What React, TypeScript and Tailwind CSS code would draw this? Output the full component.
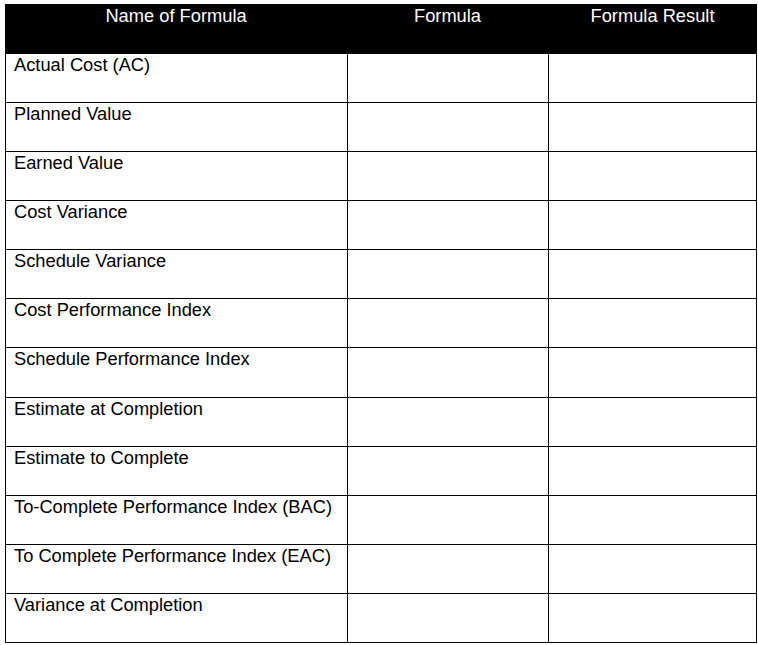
import React from "react";

const rows = [
  "Actual Cost (AC)",
  "Planned Value",
  "Earned Value",
  "Cost Variance",
  "Schedule Variance",
  "Cost Performance Index",
  "Schedule Performance Index",
  "Estimate at Completion",
  "Estimate to Complete",
  "To-Complete Performance Index (BAC)",
  "To Complete Performance Index (EAC)",
  "Variance at Completion",
];

export default function App() {
  return (
    <div className="bg-white w-[758px] h-[645px] pt-[4px] pl-[5px]" style={{ fontFamily: '"Liberation Sans", Arial, sans-serif' }}>
      <div className="w-[752px]">
        <div className="grid grid-cols-[342px_201px_209px] h-[50px] bg-black text-white text-[18.3px] leading-[21px]">
          <div className="text-center pt-[1px]">Name of Formula</div>
          <div className="text-center pt-[1px]">Formula</div>
          <div className="text-center pt-[1px]">Formula Result</div>
        </div>
        {rows.map((r, i) => (
          <div
            key={r}
            className={`grid grid-cols-[342px_201px_209px] border-b border-black text-black text-[18.3px] leading-[21px] ${i === 6 ? "h-[50px]" : "h-[49px]"}`}
          >
            <div className="border-l border-black pl-[8px] pt-0 whitespace-nowrap">{r}</div>
            <div className="border-l border-black"></div>
            <div className="border-l border-r border-black"></div>
          </div>
        ))}
      </div>
    </div>
  );
}
